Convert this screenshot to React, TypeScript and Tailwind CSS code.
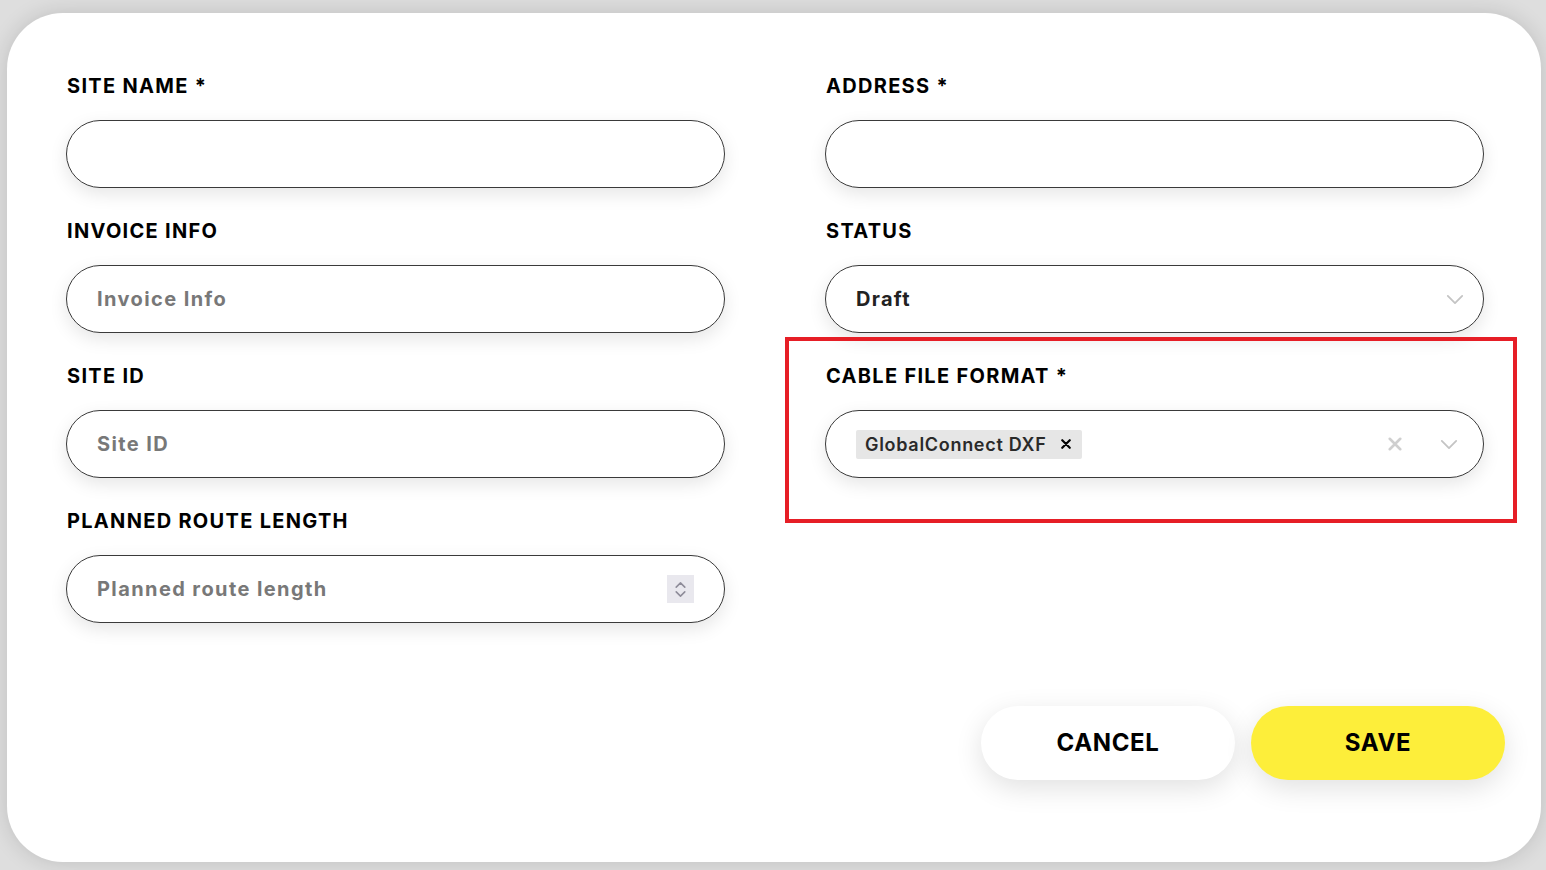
import React from "react";

const ChevronDown = ({ className = "" }: { className?: string }) => (
  <svg viewBox="0 0 20 12" className={className} fill="none" stroke="currentColor" strokeWidth="2" strokeLinecap="round" strokeLinejoin="round">
    <path d="M2 2 L10 10 L18 2" />
  </svg>
);

const Cross = ({ className = "", width = 2 }: { className?: string; width?: number }) => (
  <svg viewBox="0 0 12 12" className={className} fill="none" stroke="currentColor" strokeWidth={width} strokeLinecap="round">
    <path d="M1.5 1.5 L10.5 10.5 M10.5 1.5 L1.5 10.5" />
  </svg>
);

const Label = ({ children }: { children: React.ReactNode }) => (
  <div className="h-[24px] mb-[22px] pl-[1px] flex items-center text-[20px] font-bold text-black leading-none tracking-[1.3px]">
    {children}
  </div>
);

const Box = ({ children }: { children?: React.ReactNode }) => (
  <div className="h-[68px] rounded-full border border-[#3a3a3a] bg-white shadow-[0_6px_18px_rgba(0,0,0,0.10)] flex items-center pl-[30px] pr-[30px]">
    {children}
  </div>
);

const Field = ({ label, children }: { label: React.ReactNode; children?: React.ReactNode }) => (
  <div>
    <Label>{label}</Label>
    <Box>{children}</Box>
  </div>
);

const Placeholder = ({ text }: { text: string }) => (
  <span className="text-[20px] font-bold text-[#787878] tracking-[1.4px]">{text}</span>
);

export default function App() {
  return (
    <div
      className="w-[1546px] h-[870px] bg-[#dedede] pt-[13px] pl-[7px] pr-[5px] pb-[8px]"
      style={{ fontFamily: "Inter, 'Noto Sans', sans-serif" }}
    >
      <div className="w-full h-full bg-white rounded-[56px] shadow-[0_0_22px_rgba(0,0,0,0.14)] pt-[61px] pl-[59px] pr-[36px] flex flex-col">
        <div className="grid grid-cols-[659px_659px] gap-x-[100px] gap-y-[31px]">
          <Field label="SITE NAME *" />
          <Field label="ADDRESS *" />
          <Field label="INVOICE INFO">
            <Placeholder text="Invoice Info" />
          </Field>
          <Field label="STATUS">
            <span className="flex-1 text-[20px] font-bold text-[#222] tracking-[1.3px]">Draft</span>
            <ChevronDown className="w-[18px] h-[11px] text-[#c4c4c4] mr-[-11px]" />
          </Field>
          <Field label="SITE ID">
            <Placeholder text="Site ID" />
          </Field>
          <div className="relative">
            <div className="absolute -left-[40px] -top-[27px] -right-[33px] -bottom-[45px] border-[4px] border-[#e61e26] pointer-events-none" />
            <Label>CABLE FILE FORMAT *</Label>
            <Box>
              <div className="flex-1 flex items-center">
                <span className="h-[29px] bg-[#e6e6e6] rounded-[2px] flex items-center pl-[9px] pr-[11px] gap-[15px]">
                  <span className="text-[18px] font-semibold text-[#2a2a2a] tracking-[0.7px]">GlobalConnect DXF</span>
                  <Cross className="w-[10px] h-[10px] text-black" width={2.6} />
                </span>
              </div>
              <Cross className="w-[14px] h-[14px] text-[#cfcfcf] mr-[38px]" width={2.2} />
              <ChevronDown className="w-[18px] h-[11px] text-[#c4c4c4] mr-[-5px]" />
            </Box>
          </div>
          <Field label="PLANNED ROUTE LENGTH">
            <span className="flex-1">
              <Placeholder text="Planned route length" />
            </span>
            <span className="w-[27px] h-[28px] bg-[#e9e8ee] flex flex-col items-center justify-center gap-[3px] text-[#8e8c99]">
              <svg viewBox="0 0 12 7" className="w-[11px] h-[6px]" fill="none" stroke="currentColor" strokeWidth="1.8" strokeLinecap="round" strokeLinejoin="round">
                <path d="M1 6 L6 1 L11 6" />
              </svg>
              <svg viewBox="0 0 12 7" className="w-[11px] h-[6px]" fill="none" stroke="currentColor" strokeWidth="1.8" strokeLinecap="round" strokeLinejoin="round">
                <path d="M1 1 L6 6 L11 1" />
              </svg>
            </span>
          </Field>
        </div>
        <div className="mt-[83px] flex justify-end gap-[16px]">
          <button className="w-[254px] h-[74px] rounded-full bg-white shadow-[0_8px_28px_rgba(0,0,0,0.12)] text-[24px] font-bold text-black tracking-[0.6px]">
            CANCEL
          </button>
          <button className="w-[254px] h-[74px] rounded-full bg-[#fdee3a] shadow-[0_8px_28px_rgba(0,0,0,0.12)] text-[24px] font-bold text-black tracking-[0.6px]">
            SAVE
          </button>
        </div>
      </div>
    </div>
  );
}
